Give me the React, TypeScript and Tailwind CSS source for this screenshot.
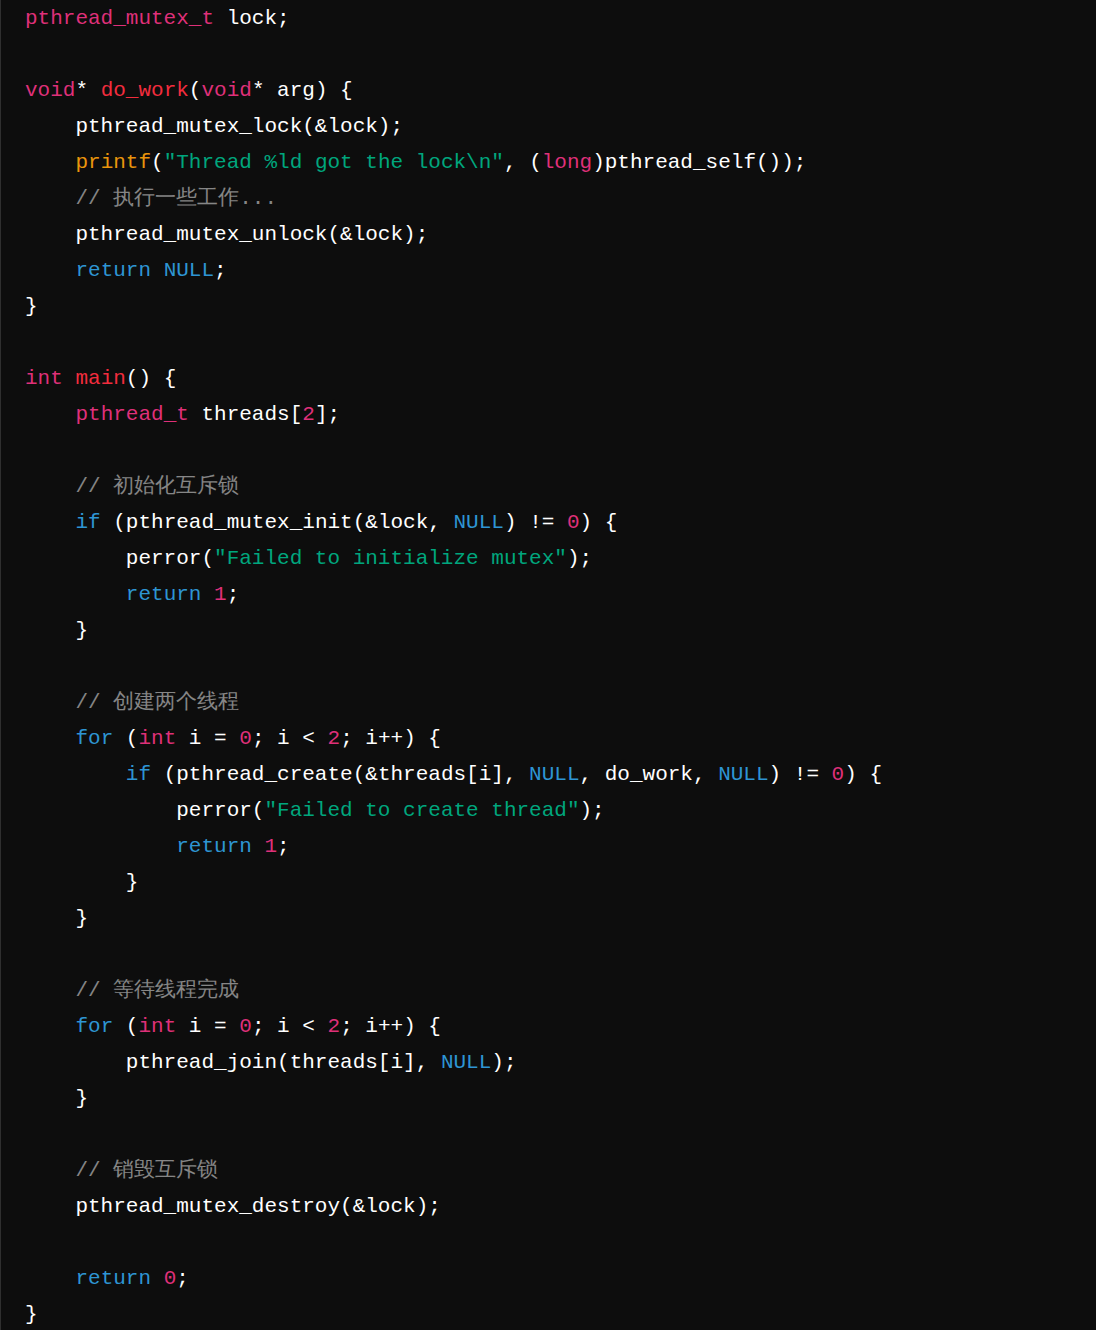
type Kind = "p" | "k" | "t" | "f" | "b" | "s" | "n" | "c";

const color: Record<Kind, string> = {
  p: "text-white",
  k: "text-[#2e95d3]",
  t: "text-[#df3079]",
  f: "text-[#f22c3d]",
  b: "text-[#e9950c]",
  s: "text-[#00a67d]",
  n: "text-[#df3079]",
  c: "text-white/50",
};

type Tok = [string, Kind];

const I1 = "    ";
const I2 = "        ";
const I3 = "            ";

const lines: Tok[][] = [
  [["pthread_mutex_t", "t"], [" lock;", "p"]],
  [],
  [["void", "t"], ["* ", "p"], ["do_work", "f"], ["(", "p"], ["void", "t"], ["* arg) {", "p"]],
  [[I1 + "pthread_mutex_lock(&lock);", "p"]],
  [[I1, "p"], ["printf", "b"], ["(", "p"], ['"Thread %ld got the lock\\n"', "s"], [", (", "p"], ["long", "t"], [")pthread_self());", "p"]],
  [[I1 + "// 执行一些工作...", "c"]],
  [[I1 + "pthread_mutex_unlock(&lock);", "p"]],
  [[I1, "p"], ["return", "k"], [" ", "p"], ["NULL", "k"], [";", "p"]],
  [["}", "p"]],
  [],
  [["int", "t"], [" ", "p"], ["main", "f"], ["() {", "p"]],
  [[I1, "p"], ["pthread_t", "t"], [" threads[", "p"], ["2", "n"], ["];", "p"]],
  [],
  [[I1 + "// 初始化互斥锁", "c"]],
  [[I1, "p"], ["if", "k"], [" (pthread_mutex_init(&lock, ", "p"], ["NULL", "k"], [") != ", "p"], ["0", "n"], [") {", "p"]],
  [[I2 + "perror(", "p"], ['"Failed to initialize mutex"', "s"], [");", "p"]],
  [[I2, "p"], ["return", "k"], [" ", "p"], ["1", "n"], [";", "p"]],
  [[I1 + "}", "p"]],
  [],
  [[I1 + "// 创建两个线程", "c"]],
  [[I1, "p"], ["for", "k"], [" (", "p"], ["int", "t"], [" i = ", "p"], ["0", "n"], ["; i < ", "p"], ["2", "n"], ["; i++) {", "p"]],
  [[I2, "p"], ["if", "k"], [" (pthread_create(&threads[i], ", "p"], ["NULL", "k"], [", do_work, ", "p"], ["NULL", "k"], [") != ", "p"], ["0", "n"], [") {", "p"]],
  [[I3 + "perror(", "p"], ['"Failed to create thread"', "s"], [");", "p"]],
  [[I3, "p"], ["return", "k"], [" ", "p"], ["1", "n"], [";", "p"]],
  [[I2 + "}", "p"]],
  [[I1 + "}", "p"]],
  [],
  [[I1 + "// 等待线程完成", "c"]],
  [[I1, "p"], ["for", "k"], [" (", "p"], ["int", "t"], [" i = ", "p"], ["0", "n"], ["; i < ", "p"], ["2", "n"], ["; i++) {", "p"]],
  [[I2 + "pthread_join(threads[i], ", "p"], ["NULL", "k"], [");", "p"]],
  [[I1 + "}", "p"]],
  [],
  [[I1 + "// 销毁互斥锁", "c"]],
  [[I1 + "pthread_mutex_destroy(&lock);", "p"]],
  [],
  [[I1, "p"], ["return", "k"], [" ", "p"], ["0", "n"], [";", "p"]],
  [["}", "p"]],
];

export default function App() {
  return (
    <div className="h-[1330px] w-[1096px] overflow-hidden border-l border-[#2f2f2f] bg-[#0d0d0d]">
      <pre className="mt-px pl-6 font-['Liberation_Mono','Noto_Sans_CJK_SC',monospace] text-[21px] leading-[36px] text-white">
        <code>
          {lines.map((line, i) => (
            <div key={i} className="h-9 whitespace-pre">
              {line.map(([text, kind], j) => (
                <span key={j} className={color[kind]}>
                  {text}
                </span>
              ))}
            </div>
          ))}
        </code>
      </pre>
    </div>
  );
}
